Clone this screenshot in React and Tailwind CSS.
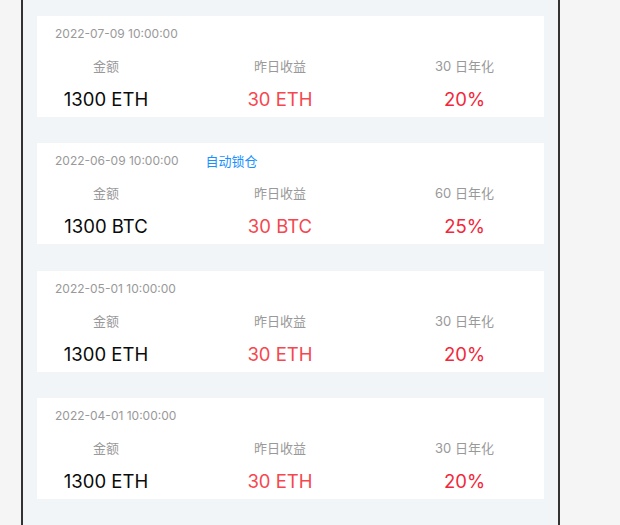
const records = [
  { time: "2022-07-09 10:00:00", amount: "1300 ETH", income: "30 ETH", days: 30, rate: "20%" },
  { time: "2022-06-09 10:00:00", amount: "1300 BTC", income: "30 BTC", days: 60, rate: "25%", autoLock: true },
  { time: "2022-05-01 10:00:00", amount: "1300 ETH", income: "30 ETH", days: 30, rate: "20%" },
  { time: "2022-04-01 10:00:00", amount: "1300 ETH", income: "30 ETH", days: 30, rate: "20%" },
];

const RecordCard = ({ item }) => (
  <div className="h-[101px] shrink-0 bg-white flex flex-col pt-[8px]">
    <div className="flex items-center pl-[18px] leading-[20px]">
      <span className="text-[12px] text-[#999]">{item.time}</span>
      {item.autoLock && (
        <span className="ml-[27px] text-[13px] text-[#1890ff]">自动锁仓</span>
      )}
    </div>
    <div className="mt-[12px] grid grid-cols-[138px_210px_1fr] text-center text-[13px] leading-[20px] text-[#999]">
      <span>金额</span>
      <span>昨日收益</span>
      <span>{item.days} 日年化</span>
    </div>
    <div className="mt-[11px] grid grid-cols-[138px_210px_1fr] text-center text-[18.5px] leading-[24px]">
      <span className="text-[#0a0a0a]">{item.amount}</span>
      <span className="text-[#f5474f]">{item.income}</span>
      <span className="text-[#f2283a]">{item.rate}</span>
    </div>
  </div>
);

export default function App() {
  return (
    <div
      className="w-[620px] h-[525px] overflow-hidden bg-[#f5f5f5] pl-[21px]"
      style={{ fontFamily: 'Inter, "Noto Sans CJK SC", sans-serif' }}
    >
      <div className="w-[539px] h-full border-x-2 border-[#333] bg-[#f2f5f8] px-[14px] pt-[16px] flex flex-col gap-[26.4px]">
        {records.map((item) => (
          <RecordCard key={item.time} item={item} />
        ))}
      </div>
    </div>
  );
}
